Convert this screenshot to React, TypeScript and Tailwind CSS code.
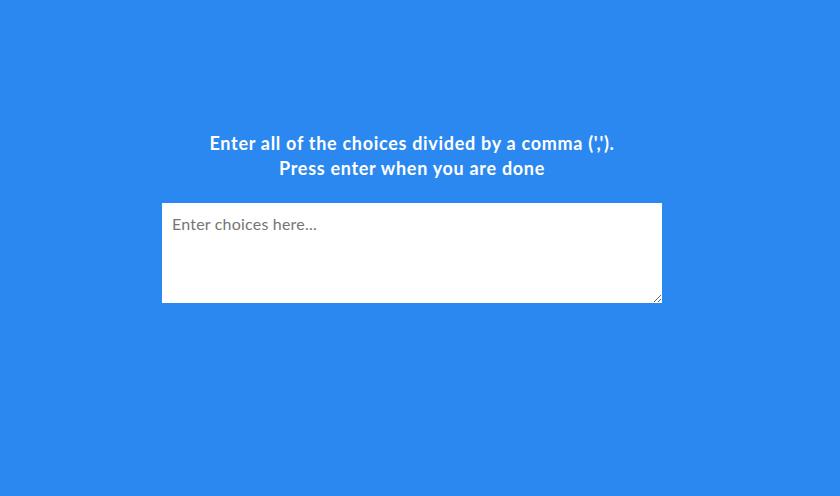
export default function App() {
  return (
    <div className="flex h-[496px] w-full flex-col items-center bg-[#2b88f0] pt-[131px] pr-[16px] font-['Lato','Open_Sans',sans-serif]">
      <h2 className="text-center text-[18px] leading-[25px] font-bold tracking-[0.7px] text-white">
        Enter all of the choices divided by a comma (',').
        <br />
        Press enter when you are done
      </h2>
      <textarea
        placeholder="Enter choices here..."
        className="mt-[22px] block h-[100px] w-[500px] bg-white px-[10px] py-[10px] text-[16px] leading-[22px] tracking-[0.2px] text-gray-800 placeholder:text-[#757575] outline-none"
      />
    </div>
  )
}
